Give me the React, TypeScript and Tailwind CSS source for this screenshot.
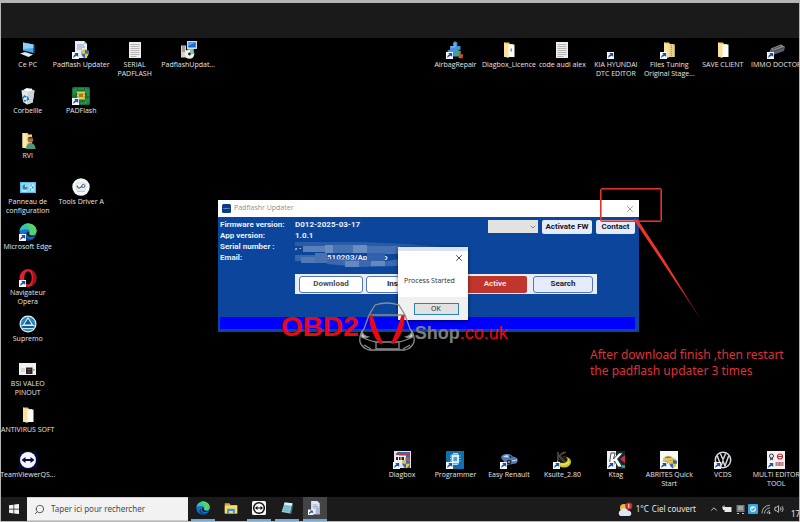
import type { ReactNode } from 'react'
import { ChevronDown, ChevronUp, Search, Volume2, X } from 'lucide-react'

const Shortcut = () => (
  <g>
    <rect x="0" y="11" width="7" height="7" fill="#f7f9fc" />
    <path d="M1.300 16.900c-.2-2.300 1-3.400 2.200-3.500L2.300 12.100h3.900V16l-1.300-1.300c-1.200.2-2.300.9-3.600 2.200z" fill="#1d4f9c" />
  </g>
)

const Folder = () => (
  <g>
    <path d="M4 1.500h5l1 1.500h3v13H4z" fill="#e8c56b" />
    <path d="M7.500 3.500h7V16h-7z" fill="#fbfbf8" />
    <path d="M4 1.500l4.500 2V17L4 15.500z" fill="#fbe09a" />
  </g>
)

const TextFile = () => (
  <g>
    <path d="M3 1h12v16H3z" fill="#eeeeec" />
    <path d="M4.500 3.500h9M4.500 5.500h9M4.500 7.500h9M4.500 9.500h9M4.500 11.500h9M4.500 13.500h9M4.500 15.500h6" stroke="#a5a5a3" strokeWidth=".8" />
  </g>
)

const Shield = () => (
  <g>
    <path d="M13 8.500c1.400 1 2.500 1.200 4 1.300 0 4-1.200 6.200-4 7.600z" fill="#f2c230" />
    <path d="M13 8.500c-1.400 1-2.500 1.200-4 1.300 0 4 1.200 6.200 4 7.600z" fill="#2b6fc4" />
    <path d="M13 8.500c1.400 1 2.500 1.200 4 1.300l-.2 3H13z" fill="#2b6fc4" />
    <path d="M13 8.500c-1.400 1-2.500 1.200-4 1.300l.2 3H13z" fill="#f2c230" />
  </g>
)

const EdgeLogo = () => (
  <g>
    <circle cx="9" cy="9" r="8.500" fill="#1673c9" />
    <path d="M.6 8C1.200 3.500 4.800.5 9 .5c5 0 8.500 3.400 8.500 7.200 0 2.800-2 4.300-4.600 4.300-1.800 0-3-.6-2.400-1.500.8-1.200.4-3.700-2.300-3.900C5.500 6.400 1.800 6.800.6 8z" fill="#34c3b0" />
    <path d="M9 .5c5 0 8.500 3.400 8.500 7.200 0 2.800-2 4.300-4.600 4.300-1.800 0-3-.6-2.400-1.500C12 7.500 11 3 5.500 1.300 6.600.8 7.800.5 9 .5z" fill="#58d36b" />
    <path d="M6.500 9.500c-.6 4 2.500 6.800 6.500 6.300 1.400-.2 2.600-.8 3.300-1.500C14 18 9.500 18 7.500 17 3.500 15.500 3.500 11 6.500 9.500z" fill="#0c4292" />
    <path d="M8.500 8.500c-1.500 1.600-1 4.400 1.500 5.200 2 .6 4.700.3 6.300-.7.8-.6.600-1-.2-.6-1.500.7-4.400.5-5.400-.5-.8-.8-.6-1.800-.4-2.300z" fill="#101c2c" />
  </g>
)

const Arrows = ({ fill }: { fill: string }) => (
  <path d="M2.500 9l4-3v2h5V6l4 3-4 3v-2h-5v2z" fill={fill} />
)

const art: Record<string, ReactNode> = {
  pc: (
    <g>
      <path d="M4 1.500l10.500 2v8.500L4 9.500z" fill="#4aa9e6" />
      <path d="M4 1.500l10.500 2v3.500L4 8z" fill="#8fd0f5" />
      <path d="M1 12.500l5-1.500 8 2.500-4.500 2.500z" fill="#dfe9f2" />
      <path d="M14.500 3.500l1 .3v8.700l-1-.5z" fill="#2b6ca8" />
    </g>
  ),
  updater: (
    <g>
      <path d="M3 0h9l3 3v14H3z" fill="#e9edf5" />
      <path d="M12 0v3h3z" fill="#b5bfd2" />
      <path d="M5 4h7M5 6h8M5 8h5" stroke="#8ba0c8" />
      <Shield />
      <Shortcut />
    </g>
  ),
  text: <TextFile />,
  installer: (
    <g>
      <path d="M8 0h10v8H8z" fill="#d5dbe0" />
      <path d="M9.200 1.200h7.600v5.300H9.200z" fill="#1b6cd0" />
      <path d="M9.200 1.200h7.600L9.200 5z" fill="#5ca6f0" />
      <path d="M11 8h4v1.500h-4z" fill="#9aa3ab" />
      <path d="M2 4.500h5v12H2z" fill="#d7d2c4" />
      <path d="M3 6h3M3 8h3M3 10h3" stroke="#6a6a62" />
      <circle cx="10.500" cy="13" r="4.800" fill="#e9f1ee" />
      <path d="M10.500 8.200a4.800 4.800 0 0 1 4.800 4.800h-3.300z" fill="#78c9a0" />
      <circle cx="10.500" cy="13" r="1.400" fill="#222" />
    </g>
  ),
  bin: (
    <g>
      <path d="M2.500 3.500L8 2l7.500 1.500-1.800 12L8 17.500 4 15z" fill="#e4e9ee" />
      <path d="M2.500 3.500l6 2L15.500 3.500 10 1z" fill="#b9c3cc" />
      <path d="M8.500 5.500L8 17.500l5.700-2 1.800-12z" fill="#cbd3da" />
      <path d="M4.500 3.200L8 .8l2 1.700 2.500-1.200.8 2.200-4.800 1.500z" fill="#fff" />
      <path d="M4 11.500l1.500-2.500 1.700 1M8 9.500l1.400 2.700-1.700.8M7 14l-2.500-.5" stroke="#1f6fc4" strokeWidth="1.400" fill="none" />
    </g>
  ),
  chip: (
    <g>
      <rect width="18" height="18" rx="1.500" fill="#12733e" />
      <path d="M2 2v6M4 1v5M14 1v5M16 2v7M2 12v4M14 12v5M16 11v5M6 2h6M8 16h6" stroke="#4ead6c" strokeWidth=".8" />
      <rect x="5" y="4.500" width="8" height="8" fill="#e6cf3f" />
      <rect x="7" y="6.500" width="4" height="3.500" fill="#938323" />
      <path d="M5 7h1.500M5 10h1.500M11.500 7H13M11.500 10H13" stroke="#7c6c16" strokeWidth=".7" />
      <Shortcut />
    </g>
  ),
  userFolder: (
    <g>
      <path d="M3.500 1h5l1 1.500h3.500V16H3.500z" fill="#f4d68c" />
      <path d="M3.500 1l4 2v13.500l-4-1z" fill="#ffe9ac" />
      <circle cx="11.500" cy="7.800" r="2.800" fill="#a66f3f" />
      <path d="M8.700 7.100c.5-3.200 5.200-3.200 5.600 0-1.800-1-3.800-1-5.600 0z" fill="#423021" />
      <path d="M7 17c0-4 2-6 4.500-6s5 2 5 6z" fill="#4f967a" />
    </g>
  ),
  panel: (
    <g>
      <rect x="1" y="4" width="16" height="11" fill="#58bce8" />
      <rect x="2" y="5" width="14" height="9" fill="#8ed8f5" />
      <circle cx="6" cy="9" r="2.600" fill="#2487c9" />
      <path d="M6 9V6.400A2.600 2.600 0 0 1 8.600 9z" fill="#f5d95a" />
      <path d="M10.500 7h4M10.500 9.500h4M10.500 12h4M3.500 13h4" stroke="#e8f8ff" />
      <path d="M12 6.500v1M13.500 9v1M11.500 11.500v1" stroke="#1771b4" strokeWidth="1.200" />
    </g>
  ),
  tools: (
    <g>
      <circle cx="9" cy="9" r="8.700" fill="#f6f7f7" />
      <rect x="4" y="5" width="10" height="7" rx="1" fill="none" stroke="#c7d0d6" strokeWidth=".7" />
      <path d="M5 7.500q1 3 2.500 2.500T10 8" stroke="#3c5f86" strokeWidth="1.100" fill="none" />
      <circle cx="11.300" cy="8" r="1.600" fill="none" stroke="#3c5f86" />
      <path d="M5 13.500h8" stroke="#aab5bc" strokeWidth=".7" />
    </g>
  ),
  edge: (
    <g>
      <EdgeLogo />
      <Shortcut />
    </g>
  ),
  opera: (
    <g>
      <path fillRule="evenodd" d="M9 0a8.500 9 0 1 0 0 18A8.500 9 0 0 0 9 0zm0 2.500c2.200 0 3.700 2.600 3.700 6.500s-1.500 6.500-3.700 6.500S5.300 12.900 5.300 9 6.800 2.500 9 2.500z" fill="#e3202f" />
      <path d="M12 1c7 3 7 13 0 16 2.500-3 3-12.500 0-16z" fill="#a3101c" />
      <Shortcut />
    </g>
  ),
  supremo: (
    <g>
      <circle cx="9" cy="9" r="8.500" fill="#e8f4fa" />
      <circle cx="9" cy="9" r="7.300" fill="#2c86bd" />
      <path d="M9 2l5 8H4z" fill="#f2f9fd" />
      <path d="M9 3.800l3.600 5.700H5.400z" fill="#0d5e93" />
      <path d="M3.500 11h11v2.200h-11z" fill="#0d5e93" />
      <path d="M2.500 10.500h13M3.500 13.600h11" stroke="#f2f9fd" strokeWidth=".9" />
    </g>
  ),
  photo: (
    <g>
      <rect x="0" y="3" width="17" height="12" fill="#f1f1ee" />
      <path d="M7 7.500h6.500V14H7z" fill="#2c2329" />
      <path d="M2 9h4M2 11h4" stroke="#a9b7a6" strokeWidth=".8" />
      <path d="M8.500 9.500h3M9 12h2" stroke="#8b4956" />
      <circle cx="15" cy="10" r=".8" fill="#5c7f60" />
    </g>
  ),
  folder: <Folder />,
  teamviewer: (
    <g>
      <rect width="18" height="18" fill="#06063a" />
      <circle cx="9" cy="9" r="8" fill="#f4f5fa" />
      <Arrows fill="#0a0a3e" />
    </g>
  ),
  puzzle: (
    <g>
      <path d="M4 5h3.500C6.500 3 7 .5 9.200.5S12 3 11 5h3.500v4c-1.500-.7-3 .2-3 1.500s1.500 2.200 3 1.500v3.500H4V12c-3 .7-3.500-4 0-3.200z" fill="#4a90d5" />
      <path d="M5 6h4V2" stroke="#8dc2ee" fill="none" />
      <path d="M11 9l4 1-1 4-4-1z" fill="#35b44c" />
      <path d="M13 12.500l4 1-.5 4-4-.5z" fill="#d94a2e" />
      <Shortcut />
    </g>
  ),
  licence: (
    <g>
      <Folder />
      <path d="M10.500 7.500h1.500v3h-1.500z" fill="#858b96" />
    </g>
  ),
  blank: <Shortcut />,
  zipFolder: (
    <g>
      <Folder />
      <path d="M8.500 3.500h6V16h-6z" fill="#edd27c" />
      <path d="M11.500 4v12" stroke="#a5924f" strokeDasharray="1 1" />
      <Shortcut />
    </g>
  ),
  device: (
    <g>
      <path d="M4 7.500L14 3.500l4 2.500-1 4-11 4-4-3z" fill="#5b6066" />
      <path d="M4 7.500L14 3.500l4 2.500-11 4z" fill="#858b91" />
      <path d="M7 10l10-3.500M6 8l8-3" stroke="#30343a" strokeWidth=".7" />
      <Shortcut />
    </g>
  ),
  diagbox: (
    <g>
      <rect x="1" width="17" height="17" fill="#dfe3e8" />
      <path d="M4 1h13v16h-3.500L4 1z" fill="#2e6bb5" />
      <path d="M2 4.500h11v8H2z" fill="#eceff4" />
      <path d="M3 2h14v2H3z" fill="#c73936" />
      <path d="M3 6h2v3H3zM6 6h1.500v3H6zM8.500 6H11v3H8.500z" fill="#252a32" />
      <path d="M12.500 6.500h4v4l-4 2z" fill="#e24a3d" />
      <Shield />
      <Shortcut />
    </g>
  ),
  programmer: (
    <g>
      <rect x="0" width="18" height="18" fill="#0e70af" />
      <path d="M5.500 3.500H13v9H5.500z" fill="#d8edfa" />
      <path d="M7.500 6H11v4H7.500z" fill="#4c9fd2" />
      <path d="M4 5h1M4 7.500h1M4 10h1M13.500 5h1M13.500 7.500h1M13.500 10h1M7 2.500h5M7 13.500h5" stroke="#b5daf0" />
      <Shortcut />
    </g>
  ),
  car: (
    <g>
      <path d="M1 7c0-2 2-4 6-4 3 0 4.500 1 5.500 2.500 2 .4 4.500 1 5 2.500.5 2-.5 4-1.500 4.500L7 14z" fill="#5579b4" />
      <path d="M3 6c1-1.500 3-2 5-1.800L9 6.500z" fill="#cbdced" />
      <path d="M9.500 4.500c1.200.2 1.800 1 2.500 2l-2.500.3z" fill="#1a2a4e" />
      <circle cx="9" cy="11" r="2.300" fill="#1c1f27" />
      <circle cx="9" cy="11" r="1.100" fill="#99a2ad" />
      <path d="M12 10l5-1" stroke="#d9e5f5" />
      <Shortcut />
    </g>
  ),
  ksuite: (
    <g>
      <ellipse cx="11" cy="11" rx="7" ry="5.500" fill="#d8c92a" />
      <ellipse cx="9.500" cy="8.500" rx="5" ry="3.600" fill="#1b1a10" />
      <path d="M5 1v8M11 1L6 5l6 6" stroke="#4a4542" strokeWidth="1.800" fill="none" />
      <path d="M10 2.500l3-1.500" stroke="#c53a2c" />
      <path d="M8 13c3 1 6 0 8-2.500" stroke="#faf27c" fill="none" />
      <Shortcut />
    </g>
  ),
  ktag: (
    <g>
      <rect x="0" y="0" width="18" height="18" fill="#eef0ef" />
      <path d="M9 0h9v18H9z" fill="#14262a" />
      <path d="M4 2h4L6.500 8 12 2h4l-5.500 6 5 8H11L7.500 10 6 16H2z" fill="#fff" stroke="#1c2a2c" strokeWidth=".8" />
      <path d="M18 4v8l-5-4z" fill="#d6264a" />
      <path d="M15 14h3v3h-3z" fill="#2c9a8e" />
      <Shortcut />
    </g>
  ),
  abrites: (
    <g>
      <rect width="18" height="18" fill="#f8f8f4" />
      <path d="M3 8c2-4 8-4 10-1l3 1v4H3z" fill="#dcc169" />
      <path d="M5 7c1-2 5-2 6.500 0z" fill="#707a80" />
      <circle cx="6" cy="12" r="1.500" fill="#383838" />
      <Shield />
      <Shortcut />
    </g>
  ),
  vcds: (
    <g fill="none" stroke="#d4d7da" strokeWidth="1.500">
      <circle cx="9" cy="9" r="7.700" />
      <path d="M3.200 4.500L7 15 9 10l2 5 3.800-10.500M6.300 2.500L9 8.500l2.700-6" />
      <g stroke="none">
        <Shortcut />
      </g>
    </g>
  ),
  multi: (
    <g>
      <rect width="18" height="18" fill="#f3f1f1" />
      <circle cx="4.500" cy="5" r="2" fill="none" stroke="#3b3b40" />
      <path d="M3 9l3-2M3 7l3 2" stroke="#3b3b40" />
      <circle cx="13" cy="5.500" r="2.500" fill="none" stroke="#b9303c" strokeWidth="1.200" />
      <path d="M11 5.500h4M9 12h7M9 14h7" stroke="#b9303c" />
      <path d="M9 11v4M12.500 11v4M16 11v4" stroke="#95575e" strokeWidth=".7" />
      <Shortcut />
    </g>
  ),
  explorer: (
    <g>
      <path d="M1 3h6l1.500 2H17v11H1z" fill="#e3a72f" />
      <path d="M1 6h16v10H1z" fill="#fbd96c" />
      <path d="M4 10h10v6h-2.500v-3h-5v3H4z" fill="#3c93d8" />
    </g>
  ),
  tvTile: (
    <g>
      <rect width="18" height="18" rx="2" fill="#f8f8f8" />
      <circle cx="9" cy="9" r="7.800" fill="#0d0d10" />
      <circle cx="9" cy="9" r="5.900" fill="#f8f8f8" />
      <path d="M3.800 9L7 6.300v1.900h4V6.300L14.200 9 11 11.700V9.800H7v1.900z" fill="#0d0d10" />
    </g>
  ),
  notebook: (
    <g>
      <path d="M6 2l10 1-3 13L2 14z" fill="#8ecbd6" />
      <path d="M6 2l10 1-.7 3L5 4.500z" fill="#e3f2f2" />
      <path d="M13 16l3-13 1 1-2.500 13z" fill="#4b7c86" />
      <path d="M5.500 7l7 1M5 9.500l7 1M4.300 12l7 1" stroke="#559ba9" strokeWidth=".7" />
    </g>
  ),
  page: (
    <g>
      <path d="M4 0h8l3 3v14H4z" fill="#e3e8f2" />
      <path d="M6 5h6M6 7h7M6 9h7" stroke="#92a1c4" />
      <path d="M10 8h5v9h-5z" fill="#a8b8d8" />
      <Shortcut />
    </g>
  ),
}

const desktopItems = [
  { icon: 'pc', label: ['Ce PC'], cell: 'col-start-1 row-start-1' },
  { icon: 'updater', label: ['Padflash Updater'], cell: 'col-start-2 row-start-1' },
  { icon: 'text', label: ['SERIAL', 'PADFLASH'], cell: 'col-start-3 row-start-1' },
  { icon: 'installer', label: ['PadflashUpdat...'], cell: 'col-start-4 row-start-1' },
  { icon: 'puzzle', label: ['AirbagRepair'], cell: 'col-start-9 row-start-1' },
  { icon: 'licence', label: ['Diagbox_Licence'], cell: 'col-start-10 row-start-1' },
  { icon: 'text', label: ['code audi alex'], cell: 'col-start-11 row-start-1' },
  { icon: 'blank', label: ['KIA HYUNDAI', 'DTC EDITOR'], cell: 'col-start-12 row-start-1' },
  { icon: 'zipFolder', label: ['Files Tuning', 'Original Stage...'], cell: 'col-start-13 row-start-1' },
  { icon: 'folder', label: ['SAVE CLIENT'], cell: 'col-start-14 row-start-1' },
  { icon: 'device', label: ['IMMO DOCTOR'], cell: 'col-start-15 row-start-1' },
  { icon: 'bin', label: ['Corbeille'], cell: 'col-start-1 row-start-2' },
  { icon: 'chip', label: ['PADFlash'], cell: 'col-start-2 row-start-2' },
  { icon: 'userFolder', label: ['RVI'], cell: 'col-start-1 row-start-3' },
  { icon: 'panel', label: ['Panneau de', 'configuration'], cell: 'col-start-1 row-start-4' },
  { icon: 'tools', label: ['Tools Driver A'], cell: 'col-start-2 row-start-4' },
  { icon: 'edge', label: ['Microsoft Edge'], cell: 'col-start-1 row-start-5' },
  { icon: 'opera', label: ['Navigateur', 'Opera'], cell: 'col-start-1 row-start-6' },
  { icon: 'supremo', label: ['Supremo'], cell: 'col-start-1 row-start-7' },
  { icon: 'photo', label: ['BSI VALEO', 'PINOUT'], cell: 'col-start-1 row-start-8' },
  { icon: 'folder', label: ['ANTIVIRUS SOFT'], cell: 'col-start-1 row-start-9' },
  { icon: 'teamviewer', label: ['TeamViewerQS...'], cell: 'col-start-1 row-start-10' },
  { icon: 'diagbox', label: ['Diagbox'], cell: 'col-start-8 row-start-10' },
  { icon: 'programmer', label: ['Programmer'], cell: 'col-start-9 row-start-10' },
  { icon: 'car', label: ['Easy Renault'], cell: 'col-start-10 row-start-10' },
  { icon: 'ksuite', label: ['Ksuite_2.80'], cell: 'col-start-11 row-start-10' },
  { icon: 'ktag', label: ['Ktag'], cell: 'col-start-12 row-start-10' },
  { icon: 'abrites', label: ['ABRITES Quick', 'Start'], cell: 'col-start-13 row-start-10' },
  { icon: 'vcds', label: ['VCDS'], cell: 'col-start-14 row-start-10' },
  { icon: 'multi', label: ['MULTI EDITOR', 'TOOL'], cell: 'col-start-15 row-start-10' },
]

const pinnedApps = [
  { icon: 'edge', name: 'Microsoft Edge', look: 'border-[#76a9d4]' },
  { icon: 'explorer', name: 'Explorateur', look: 'border-transparent' },
  { icon: 'tvTile', name: 'TeamViewer', look: 'border-[#76a9d4]' },
  { icon: 'notebook', name: 'Bloc-notes', look: 'border-[#76a9d4]' },
  { icon: 'page', name: 'Padflash Updater', look: 'border-[#76a9d4] bg-[#444446]' },
]

function DesktopIcons() {
  return (
    <div className="-mr-1 grid flex-1 grid-cols-[repeat(15,minmax(0,1fr))] grid-rows-[repeat(10,minmax(45px,1fr))] pt-[3px]">
      {desktopItems.map(({ icon, label, cell }) => (
        <button key={label[0]} className={`flex flex-col items-center gap-px ${cell}`}>
          <svg viewBox="0 0 18 18" className="size-[18px] shrink-0">{art[icon]}</svg>
          <span className="font-['Open_Sans',sans-serif] text-[7px] leading-[9px] whitespace-nowrap text-[#e6e6e6]">
            {label.map(line => (
              <span key={line} className="block">{line}</span>
            ))}
          </span>
        </button>
      ))}
    </div>
  )
}

function UpdaterWindow() {
  return (
    <section
      aria-label="Padflashr Updater"
      className="absolute top-[162px] left-[217px] w-[421px] bg-[#0c469c] font-[Roboto,sans-serif] text-[8px] font-bold text-[#e9f0fb]"
    >
      <header className="flex h-[17px] items-center gap-[3px] bg-white px-1 font-['Open_Sans',sans-serif] text-[7px] font-normal text-[#8f8f8f]">
        <svg viewBox="0 0 9 9" className="size-[9px]">
          <rect width="9" height="9" rx="1.500" fill="#0d3c86" />
          <path d="M1.500 4.500h6" stroke="#7fb1e6" strokeDasharray="1 .4" />
        </svg>
        <span>Padflashr Updater</span>
        <button aria-label="Fermer" className="ml-auto">
          <X size={10} strokeWidth={2} />
        </button>
      </header>

      <div className="flex px-0.5 pt-0.5">
        <dl className="relative grid flex-1 grid-cols-[75px_1fr] leading-[11px]">
          <dt>Firmware version:</dt>
          <dd>D012-2025-03-17</dd>
          <dt>App version:</dt>
          <dd>1.0.1</dd>
          <dt>Serial number :</dt>
          <dd>, .</dd>
          <dt>Email:</dt>
          <dd className="pl-8">510203/App...co</dd>
          {/* blurred-out serial and address */}
          <svg viewBox="0 0 176 26" className="absolute top-[22px] left-[75px] h-[26px] w-[176px]">
            <path d="M0 1h66l46 2 60 5H8V5H0z" fill="#2a5ba8" />
            <path d="M8 5h30v6H8z" fill="#5a7fba" />
            <path d="M30 4h14v8H30zM58 4h14v8H58z" fill="#6c8dc2" />
            <path d="M38 4h20v8H38zM72 5h33v8H72z" fill="#4570b2" />
            <path d="M0 14h30v6H0z" fill="#3866ad" />
            <path d="M6 16h14v6H6z" fill="#5278b6" />
            <path d="M20 12h12v10H20z" fill="#4a72b3" />
            <path d="M32 18l40 1 8 3 24-4v7l-40 1-32-3z" fill="#3b68ae" />
            <path d="M50 20h14v6H50zM76 18h14v7H76z" fill="#6688bf" />
            <path d="M72 12h18v8H72z" fill="#3261ab" />
          </svg>
        </dl>
        <div className="flex items-start gap-1 pt-px pr-0.5 text-[#15171c]">
          <div className="relative flex">
            <select aria-label="Port" className="h-[13px] w-[50px] appearance-none bg-[#e2e2e2]" />
            <ChevronDown size={8} className="absolute top-[3px] right-px text-[#555]" />
          </div>
          <button className="h-[14px] w-[50px] rounded-xs bg-[#e6ebfb]">Activate FW</button>
          <button className="h-[14px] w-[39px] rounded-xs bg-[#e6ebfb]">Contact</button>
        </div>
      </div>

      <div className="mt-[11px] mr-[42px] ml-[77px] flex h-[20px] items-center gap-[3px] bg-[#e9edf5] px-1 text-[#20242c]">
        <button className="h-[17px] w-[64px] rounded-[3px] border border-[#5676b4] bg-white text-[#4c4c4c]">Download</button>
        <button className="h-[17px] w-[64px] rounded-[3px] border border-[#5676b4] bg-white">Install</button>
        <button className="mr-[3px] ml-auto h-[17px] w-[64px] rounded-[2px] bg-[#c0362c] text-[#f8dedb]">Active</button>
        <button className="h-[17px] w-[60px] rounded-[3px] border border-[#5676b4] bg-[#e6ebfb]">Search</button>
      </div>

      <div className="px-0.5 pt-[23px] pb-[3px]">
        <div role="progressbar" aria-label="Download" aria-valuenow={100} className="mr-0.5 h-[12px] bg-[#0000ff]" />
      </div>
    </section>
  )
}

function ProcessDialog() {
  return (
    <div
      role="dialog"
      aria-label="Process Started"
      className="absolute top-[209px] left-[397px] w-[70px] bg-white text-[7px] text-[#2b2b2b] shadow-[0_1px_4px_rgba(0,0,0,0.6)]"
    >
      <div className="flex h-[18px] items-center justify-end border-t-4 border-[#dbe3f0] px-1">
        <button aria-label="Fermer">
          <X size={10} strokeWidth={2} />
        </button>
      </div>
      <p className="h-8 px-1.5 pt-[11px] font-['Open_Sans',sans-serif] leading-[10px] whitespace-nowrap">Process Started</p>
      <div className="flex h-[23px] items-center justify-center bg-[#f0f0f0] pl-1.5">
        <button className="h-[12px] w-[45px] border border-[#2a83bd] bg-[#e2e2e2] leading-[9px]">OK</button>
      </div>
    </div>
  )
}

function Watermark() {
  return (
    <div className="absolute top-[264px] left-[280px] flex h-[50px] items-center font-['Liberation_Sans',sans-serif]">
      <span className="text-[28px] leading-[52px] font-bold text-[#e60a17]">OBD2</span>
      <svg viewBox="0 0 56 50" className="h-[50px] w-[56px]" fill="none" stroke="#8c8c8e" strokeWidth="1.300">
        <path d="M10 13L16 3q12-4 24 0l6 10" />
        <path d="M10 13h36" />
        <path d="M10 13L5 27Q0 32 1 40q2 6 9 8h36q7-2 9-8 1-8-4-13L46 13" />
        <path d="M3 29q1 5 6 6-5 2-7-1zM53 29q-1 5-6 6 5 2 7-1z" fill="#d4d4d4" />
        <path d="M17 40h23v7H17zM2 35q9 4 15 5M54 35q-9 4-14 5M5 43l7 4M51 43l-7 4" />
        <path d="M11 14q0 16 10 27h2Q17 28 13 14zM45 14q0 16-10 27h-2q6-13 10-27z" fill="#e60a17" stroke="#e60a17" />
      </svg>
      <span className="pt-3 text-[18px] font-bold text-[#7d7d80]">Shop</span>
      <span className="pt-3 text-[18px] text-[#e60a17]">.co.uk</span>
    </div>
  )
}

function Annotation() {
  return (
    <>
      <div className="absolute top-[150px] left-[599px] h-[34px] w-[62px] rounded-xs border border-[#e5312b] outline-1 -outline-offset-2 outline-[#e5312b]/60" />
      <svg viewBox="0 0 74 110" className="absolute top-[180px] left-[632px] h-[110px] w-[74px]">
        <defs>
          <linearGradient id="tail" x1="0" y1="0" x2="1" y2="1">
            <stop offset=".6" stopColor="#f0332d" />
            <stop offset="1" stopColor="#f0332d" stopOpacity=".2" />
          </linearGradient>
        </defs>
        <path d="M1 1l4 1L30 40 70 105 28 42 3 5z" fill="url(#tail)" />
      </svg>
      <p className="absolute top-[309px] left-[589px] text-[12px] leading-4 whitespace-nowrap text-[#df3238]">
        After download finish ,then restart
        <br />
        the padflash updater 3 times
      </p>
    </>
  )
}

function Taskbar() {
  return (
    <footer className="flex h-[24px] items-stretch overflow-hidden bg-[#1b1b1c] text-[#e8e8e8]">
      <button aria-label="Démarrer" className="flex w-[26px] items-center justify-center">
        <svg viewBox="0 0 10 10" className="size-[10px]" fill="#f3f3f3">
          <path d="M0 1.300l4.500-.6v4H0zM5.200.6L10 0v4.700H5.200zM0 5.400h4.500v4L0 8.800zM5.200 5.400H10V10l-4.800-.6z" />
        </svg>
      </button>
      <label className="flex w-[161px] items-center gap-1.5 border-y border-[#cfcfcf] bg-[#f2f2f2] pl-[7px] text-[#4a4a4a]">
        <Search size={11} className="shrink-0 -scale-x-100" />
        <input
          type="text"
          placeholder="Taper ici pour rechercher"
          aria-label="Taper ici pour rechercher"
          className="w-full bg-transparent text-[8px] outline-none placeholder:text-[#4a4a4a]"
        />
      </label>
      <div className="flex gap-1 pl-[3px]">
        {pinnedApps.map(({ icon, name, look }) => (
          <button key={name} aria-label={name} className={`flex w-[24px] items-center justify-center border-b-2 ${look}`}>
            <svg viewBox="0 0 18 18" className="size-[14px]">
              {icon === 'edge' ? <EdgeLogo /> : art[icon]}
            </svg>
          </button>
        ))}
      </div>
      <div className="ml-auto flex shrink-0 items-center gap-[3px] text-[8px]">
        <svg viewBox="0 0 15 15" className="size-[15px]">
          <circle cx="6" cy="6" r="4" fill="#f3b63c" />
          <path d="M2.500 14a3 3 0 0 1 0-5.500C4 5.500 8 5.500 9.500 8.500 14 8 14.500 14 11 14z" fill="#dce7f5" />
          <circle cx="10.800" cy="4" r="3.600" fill="#c9302c" />
          <path d="M10.800 2v4" stroke="#fff" />
        </svg>
        <span>1°C</span>
        <span>Ciel couvert</span>
        <ChevronUp size={10} className="ml-2.5" />
        <svg viewBox="0 0 10 10" className="size-[10px]">
          <path d="M1 3h8.500v5H2.500V6H1z" fill="#e8e8e8" />
          <path d="M0 2v3M2 1.500v2" stroke="#e8e8e8" />
        </svg>
        <svg viewBox="0 0 10 10" className="size-[10px]">
          <path d="M1.500 1h8v7h-8z" fill="#77797b" />
          <path d="M3 3h5M3 5h5M2 9.500h2M7 9.500h2" stroke="#c9cacb" />
        </svg>
        <svg viewBox="0 0 10 10" className="size-[10px]">
          <rect width="10" height="10" rx="1" fill="#37a6de" />
          <circle cx="5" cy="5" r="3" fill="#c8eafa" />
          <path d="M3.500 5l1.200 1.300 2-2.500" stroke="#1979b5" fill="none" />
        </svg>
        {/* signal arcs fan out from the lower right corner */}
        <svg viewBox="0 0 10 10" className="size-[10px]" fill="none" stroke="#a9a9aa">
          <path d="M1 9.500Q1 2 9 1.200M3.500 9.500Q3.800 4.500 9 3.800M6 9.500Q6.300 7 9 6.500" />
          <circle cx="8.500" cy="9" r=".6" fill="#e8e8e8" stroke="#e8e8e8" />
        </svg>
        <Volume2 size={10} />
        <span className="ml-1 w-2 self-end leading-[14px]">17/</span>
      </div>
    </footer>
  )
}

export default function App() {
  return (
    <div className="flex min-h-screen flex-col overflow-hidden border-x border-t-[3px] border-b border-[#b4b6b6] bg-black font-['Noto_Sans','Open_Sans',sans-serif]">
      <div className="h-[35px] bg-[#1a1a1a]" />
      <main className="relative flex flex-1 flex-col overflow-hidden">
        <DesktopIcons />
        <UpdaterWindow />
        <ProcessDialog />
        <Watermark />
        <Annotation />
      </main>
      <Taskbar />
    </div>
  )
}
